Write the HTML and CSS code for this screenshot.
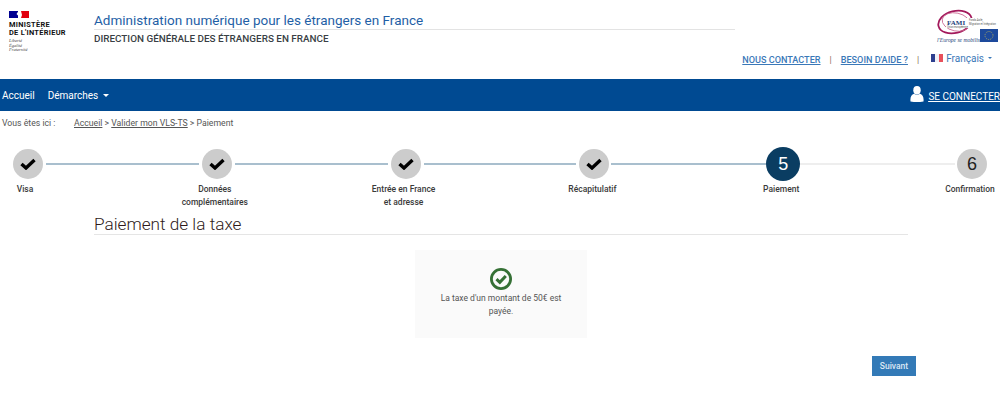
FILE: index.html
```html
<!DOCTYPE html>
<html lang="fr">
<head>
  <meta charset="UTF-8">
  <title>Administration numérique pour les étrangers en France</title>
  <link rel="stylesheet" href="styles.css">
</head>
<body>

<header class="site-header">
  <div class="header-top">
    <div class="ministry-logo">
      <svg class="ministry-flag" width="20" height="7" viewBox="0 0 20 7">
        <rect width="20" height="7" fill="#fff"/>
        <rect width="9" height="7" fill="#000091"/>
        <path d="M9 7 L9 4.5 L7.5 3 L9.5 0 L12.5 0 L11 3 L12 5 L11 7 Z" fill="#fff"/>
        <path d="M12 0 H20 V7 H12 L13 4 Z" fill="#e1000f"/>
      </svg>
      <div class="ministry-name">MINISTÈRE<br>DE L'INTÉRIEUR</div>
      <div class="ministry-motto">Liberté<br>Égalité<br>Fraternité</div>
    </div>

    <div class="site-titles">
      <div class="site-title">Administration numérique pour les étrangers en France</div>
      <div class="site-subtitle">DIRECTION GÉNÉRALE DES ÉTRANGERS EN FRANCE</div>
    </div>

    <svg class="fami-logo" width="62" height="35" viewBox="0 0 62 35">
      <ellipse cx="19" cy="13" rx="17" ry="11" fill="none" stroke="#a3195b" stroke-width="1.8" transform="rotate(-14 19 13)"/>
      <ellipse cx="20" cy="13" rx="14" ry="9" fill="none" stroke="#c9628f" stroke-width="0.8" transform="rotate(12 20 13)"/>
      <rect x="10" y="9" width="52" height="10" fill="#fff"/>
      <text class="fami-text" x="11" y="15.5">FAMI</text>
      <text class="fami-small" x="33" y="12">Fonds Asile,</text>
      <text class="fami-small" x="33" y="15.5">Migration et Intégration</text>
      <text class="fami-small" x="11" y="18.5">Union européenne</text>
      <text class="fami-motto" x="1" y="32.5">l'Europe se mobilise</text>
      <rect x="44" y="20" width="18" height="13" fill="#1d4a9c"/>
      <circle cx="53" cy="26.5" r="4" fill="none" stroke="#d9c64a" stroke-width="0.7" stroke-dasharray="1 1.1"/>
    </svg>
  </div>

  <div class="header-links">
    <a class="top-link" href="#">NOUS CONTACTER</a>
    <span class="link-sep">|</span>
    <a class="top-link" href="#">BESOIN D'AIDE ?</a>
    <span class="link-sep">|</span>
    <span class="lang">
      <svg width="12" height="8" viewBox="0 0 12 8">
        <rect width="4" height="8" fill="#2d3f8f"/>
        <rect x="4" width="4" height="8" fill="#f1f1f6"/>
        <rect x="8" width="4" height="8" fill="#e8505b"/>
      </svg>
      Français
      <span class="caret caret-blue"></span>
    </span>
  </div>
</header>

<nav class="main-nav">
  <a class="nav-item" href="#">Accueil</a>
  <a class="nav-item" href="#">Démarches <span class="caret caret-white"></span></a>
  <a class="nav-login" href="#">
    <svg width="14" height="16" viewBox="0 0 14 16">
      <ellipse cx="7" cy="4.2" rx="3.7" ry="4.2" fill="#fff"/>
      <path d="M0.5 15.5 C0 11 1.5 8.5 4 7.8 C5.5 9.2 8.5 9.2 10 7.8 C12.5 8.5 14 11 13.5 15.5 Q7 16.5 0.5 15.5 Z" fill="#fff"/>
    </svg>
    <span class="nav-login-text">SE CONNECTER</span>
  </a>
</nav>

<div class="breadcrumb">
  <span class="breadcrumb-label">Vous êtes ici :</span>
  <span><a href="#">Accueil</a> &gt; <a href="#">Valider mon VLS-TS</a> &gt; Paiement</span>
</div>

<div class="stepper">
  <div class="step-circle"><svg class="check" width="16" height="12" viewBox="0 0 16 12"><path d="M1.5 6 L6 10 L14.5 2" fill="none" stroke="#000" stroke-width="3.4"/></svg></div>
  <div class="step-line"></div>
  <div class="step-circle"><svg class="check" width="16" height="12" viewBox="0 0 16 12"><path d="M1.5 6 L6 10 L14.5 2" fill="none" stroke="#000" stroke-width="3.4"/></svg></div>
  <div class="step-line"></div>
  <div class="step-circle"><svg class="check" width="16" height="12" viewBox="0 0 16 12"><path d="M1.5 6 L6 10 L14.5 2" fill="none" stroke="#000" stroke-width="3.4"/></svg></div>
  <div class="step-line"></div>
  <div class="step-circle"><svg class="check" width="16" height="12" viewBox="0 0 16 12"><path d="M1.5 6 L6 10 L14.5 2" fill="none" stroke="#000" stroke-width="3.4"/></svg></div>
  <div class="step-line step-line-before"></div>
  <div class="step-circle step-active">5</div>
  <div class="step-line step-line-todo"></div>
  <div class="step-circle">6</div>

  <div class="step-label label-1">Visa</div>
  <div class="step-label label-2">Données<br>complémentaires</div>
  <div class="step-label label-3">Entrée en France<br>et adresse</div>
  <div class="step-label label-4">Récapitulatif</div>
  <div class="step-label label-5">Paiement</div>
  <div class="step-label label-6">Confirmation</div>
</div>

<main class="content">
  <h1 class="page-title">Paiement de la taxe</h1>

  <div class="paid-box">
    <svg class="paid-icon" width="22" height="22" viewBox="0 0 22 22">
      <circle cx="11" cy="11" r="9.6" fill="none" stroke="#357035" stroke-width="2.8"/>
      <path d="M6.5 11.2 L9.8 14.4 L15.8 8" fill="none" stroke="#357035" stroke-width="3"/>
    </svg>
    <p class="paid-text">La taxe d'un montant de 50€ est payée.</p>
  </div>

  <div class="actions">
    <button class="btn-next" type="button">Suivant</button>
  </div>
</main>

</body>
</html>
```

FILE: styles.css
```css
body {
  margin: 0;
  font-family: 'Roboto', sans-serif;
  background: #fff;
  color: #333;
}

/* header */
.site-header {
  height: 79px;
  box-sizing: border-box;
  padding-top: 9px;
}

.header-top {
  display: flex;
  align-items: flex-start;
  height: 44px;
}

.ministry-logo {
  width: 85px;
  padding: 2px 0 0 9px;
}

.ministry-flag {
  display: block;
}

.ministry-name {
  margin-top: 3px;
  font-size: 7.4px;
  line-height: 7.5px;
  font-weight: 700;
  letter-spacing: 0.3px;
  color: #111;
  white-space: nowrap;
}

.ministry-motto {
  margin-top: 3px;
  font-family: 'Liberation Serif', serif;
  font-style: italic;
  font-size: 4.5px;
  line-height: 4.5px;
  color: #444;
}

.site-titles {
  width: 641px;
}

.site-title {
  padding-top: 3px;
  height: 17px;
  line-height: 17px;
  font-size: 13.5px;
  color: #1f5fa6;
  border-bottom: 1px solid #e3e3e3;
  white-space: nowrap;
}

.site-subtitle {
  margin-top: 3px;
  font-size: 9.9px;
  line-height: 12px;
  font-weight: 500;
  color: #3a3f45;
  white-space: nowrap;
}

.fami-logo {
  margin-left: auto;
  margin-right: 2px;
}

.fami-text {
  font-family: 'Liberation Serif', serif;
  font-weight: 700;
  font-size: 7px;
  fill: #1d3f7a;
}

.fami-small {
  font-size: 2.6px;
  fill: #555;
}

.fami-motto {
  font-family: 'Liberation Serif', serif;
  font-style: italic;
  font-size: 5.6px;
  fill: #1d3f7a;
}

.header-links {
  display: flex;
  justify-content: flex-end;
  align-items: center;
  height: 14px;
  padding-right: 8px;
  font-size: 9.1px;
}

.top-link {
  color: #3a78b8;
  font-weight: 500;
  white-space: nowrap;
}

.link-sep {
  margin: 0 9px;
  color: #8a6d55;
  font-size: 9px;
}

.lang {
  display: flex;
  align-items: center;
  gap: 3px;
  margin-top: -4px;
  margin-left: 3px;
  font-size: 10px;
  color: #3a78b8;
  white-space: nowrap;
}

.caret {
  display: inline-block;
  width: 0;
  height: 0;
  border-left: 3px solid transparent;
  border-right: 3px solid transparent;
  vertical-align: middle;
}

.caret-blue {
  border-top: 2px solid #3a78b8;
  margin-left: 1px;
  border-left-width: 2px;
  border-right-width: 2px;
}

.caret-white {
  border-top: 3px solid #fff;
  margin-left: 2px;
}

/* nav */
.main-nav {
  display: flex;
  align-items: center;
  height: 32px;
  background: #004a92;
  font-size: 10px;
}

.nav-item {
  margin-left: 2px;
  margin-right: 11px;
  color: #fff;
  text-decoration: none;
  white-space: nowrap;
}

.nav-login {
  display: flex;
  align-items: center;
  gap: 4px;
  margin-left: auto;
  color: #fff;
  white-space: nowrap;
}

.nav-login svg {
  margin-top: -3px;
}

.nav-login-text {
  text-decoration: underline;
  margin-top: 3px;
}

/* breadcrumb */
.breadcrumb {
  display: flex;
  padding: 6px 0 0 2px;
  height: 12px;
  line-height: 12px;
  font-size: 8.7px;
  color: #555;
}

.breadcrumb-label {
  width: 72px;
}

.breadcrumb a {
  color: #555;
}

/* stepper */
.stepper {
  display: grid;
  grid-template-columns: 34px 1fr 34px 1fr 34px 1fr 34px 1fr 34px 1fr 34px;
  grid-template-rows: 34px auto;
  align-items: center;
  justify-items: center;
  height: 65px;
  margin-top: 18px;
  padding: 0 11px;
}

.step-circle {
  display: flex;
  align-items: center;
  justify-content: center;
  width: 30px;
  height: 30px;
  border-radius: 50%;
  background: #ccc;
  font-family: 'Liberation Sans', sans-serif;
  font-size: 18px;
  color: #222;
}

.step-active {
  width: 34px;
  height: 34px;
  background: #0a3d62;
  color: #fff;
}

.step-line {
  width: calc(100% - 2px);
  height: 2px;
  background: #a9bfce;
}

.step-line-before {
  width: 100%;
}

.step-line-todo {
  width: 100%;
  background: #eee;
}

.step-label {
  grid-row: 2;
  align-self: start;
  width: max-content;
  margin-top: 2px;
  padding-right: 4px;
  text-align: center;
  font-size: 8.5px;
  line-height: 12.5px;
  font-weight: 500;
  color: #3a3a3a;
}

.label-1 { grid-column: 1; padding-right: 6px; }
.label-2 { grid-column: 3; }
.label-3 { grid-column: 5; }
.label-4 { grid-column: 7; }
.label-5 { grid-column: 9; }
.label-6 { grid-column: 11; }

/* content */
.content {
  margin: 0 92px 0 94px;
}

.page-title {
  margin: 0;
  padding-top: 2px;
  height: 20px;
  line-height: 21px;
  font-size: 17.2px;
  font-weight: 300;
  color: #2e1a1a;
  border-bottom: 1px solid #e5e5e5;
}

.paid-box {
  display: flex;
  flex-direction: column;
  align-items: center;
  box-sizing: border-box;
  width: 172px;
  height: 88px;
  margin: 15px auto 0 321px;
  padding: 18px 24px 0;
  background: #fafafa;
}

.paid-text {
  margin: 2px 0 0;
  text-align: center;
  font-size: 8.5px;
  line-height: 13px;
  color: #555;
}

.actions {
  display: flex;
  justify-content: flex-end;
  margin-top: 18px;
  margin-right: -8px;
}

.btn-next {
  width: 44px;
  height: 20px;
  padding: 0;
  border: none;
  background: #337ab7;
  color: #dce8f5;
  font-family: 'Roboto', sans-serif;
  font-size: 8.5px;
  font-weight: 500;
  cursor: pointer;
}
```
